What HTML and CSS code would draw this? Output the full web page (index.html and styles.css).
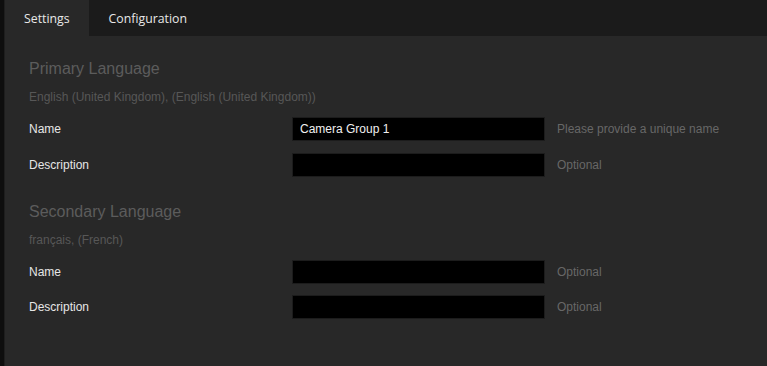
FILE: index.html
```html
<!DOCTYPE html>
<html lang="en">
<head>
  <meta charset="UTF-8">
  <meta name="viewport" content="width=device-width, initial-scale=1.0">
  <title>Camera Group Settings</title>
  <link rel="stylesheet" href="styles.css">
</head>
<body>
  <div class="app">
    <div class="side"></div>
    <div class="main">
      <div class="tabs">
        <button class="tab active">Settings</button>
        <button class="tab">Configuration</button>
      </div>

      <div class="content">
        <div class="section">
          <h2>Primary Language</h2>
          <p class="lang">English (United Kingdom), (English (United Kingdom))</p>
          <div class="row">
            <label for="name1">Name</label>
            <input type="text" id="name1" value="Camera Group 1">
            <span class="hint">Please provide a unique name</span>
          </div>
          <div class="row">
            <label for="desc1">Description</label>
            <input type="text" id="desc1">
            <span class="hint">Optional</span>
          </div>
        </div>

        <div class="section">
          <h2>Secondary Language</h2>
          <p class="lang">français, (French)</p>
          <div class="row">
            <label for="name2">Name</label>
            <input type="text" id="name2">
            <span class="hint">Optional</span>
          </div>
          <div class="row">
            <label for="desc2">Description</label>
            <input type="text" id="desc2">
            <span class="hint">Optional</span>
          </div>
        </div>
      </div>
    </div>
  </div>
</body>
</html>
```

FILE: styles.css
```css
* {
  margin: 0;
  padding: 0;
  box-sizing: border-box;
}

body {
  font-family: 'Liberation Sans', Arial, sans-serif;
  background: #282828;
  color: #e6e6e6;
  font-size: 12px;
}

.app {
  display: flex;
  min-height: 100vh;
}

.side {
  width: 4px;
  background: #0e0e0e;
}

.main {
  flex: 1;
  border-left: 1px solid #1e1e1e;
  background: #282828;
}

.tabs {
  display: flex;
  height: 36px;
  background: #1b1b1b;
}

.tab {
  font-family: 'Open Sans', 'Noto Sans', sans-serif;
  font-size: 12.3px;
  color: #e8e8e8;
  background: transparent;
  border: none;
  padding: 0 19px 0 20px;
  height: 36px;
}

.tab.active {
  background: #282828;
  padding: 0 19px;
}

.content {
  padding: 23px 24px 0;
}

.section + .section {
  margin-top: 25px;
}

h2 {
  font-size: 16px;
  font-weight: normal;
  line-height: 20px;
  color: #5c5c5c;
}

.lang {
  margin-top: 10px;
  line-height: 16px;
  color: #575757;
}

.row {
  display: grid;
  grid-template-columns: 251px 253px auto;
  column-gap: 12px;
  align-items: center;
  margin-top: 12px;
}

.section + .section .row + .row {
  margin-top: 11px;
}

.row label {
  color: #e6e6e6;
}

.row input {
  height: 24px;
  background: #000;
  border: 1px solid #1c1c1c;
  color: #f0f0f0;
  font-family: inherit;
  font-size: 12px;
  padding: 0 7px;
  outline: none;
}

.hint {
  color: #676767;
}
```
